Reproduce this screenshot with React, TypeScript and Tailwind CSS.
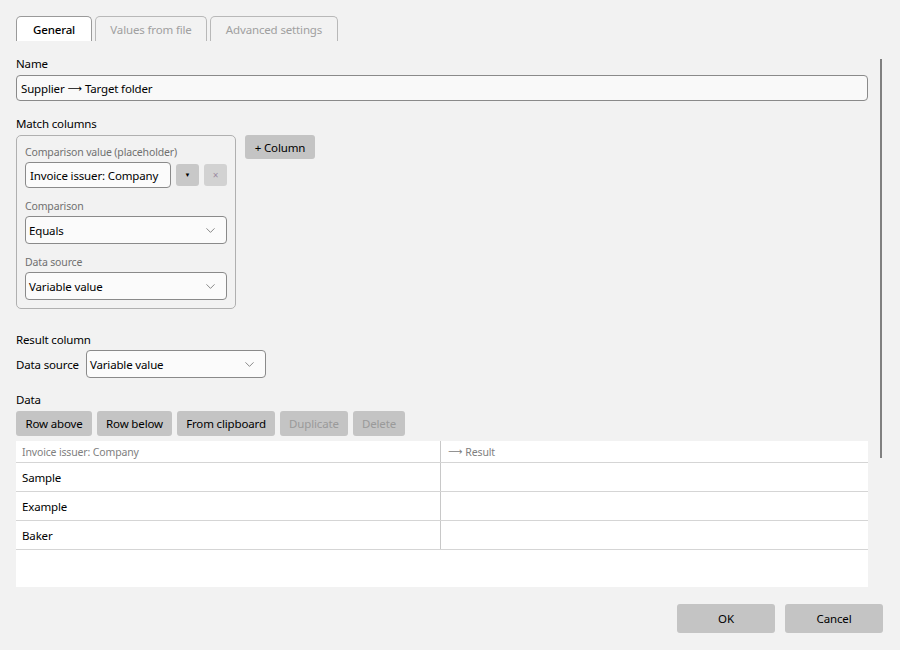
import { ChevronDown } from "lucide-react";

const font = { fontFamily: '"Noto Sans", "Segoe UI", sans-serif', letterSpacing: "-0.15px" };

function Select({ value, className = "" }: { value: string; className?: string }) {
  return (
    <div
      className={`flex h-[28px] items-center justify-between rounded-[4px] border border-[#8a8a8a] bg-[#fbfbfb] pl-[3px] pr-[8px] pt-[1px] text-[11.5px] leading-[16px] text-black ${className}`}
    >
      <span>{value}</span>
      <ChevronDown className="h-[15px] w-[15px] text-[#555]" strokeWidth={1.1} />
    </div>
  );
}

function GrayButton({ label, width, disabled = false }: { label: string; width: string; disabled?: boolean }) {
  return (
    <button
      className={`h-[25px] rounded-[3px] bg-[#c4c4c4] pt-[1px] text-[11.5px] leading-[16px] ${width} ${disabled ? "text-[#9a9a9a]" : "text-black"}`}
    >
      {label}
    </button>
  );
}

function Arrow() {
  return <span className="font-['DejaVu_Sans'] text-[10px] tracking-normal">⟶</span>;
}

export default function App() {
  const tabs = [
    { label: "General", width: "w-[76px]" },
    { label: "Values from file", width: "w-[112px]" },
    { label: "Advanced settings", width: "w-[128px]" },
  ];
  const rows = ["Sample", "Example", "Baker"];

  return (
    <div className="relative flex h-[650px] w-[900px] flex-col bg-[#f2f2f2] pl-4 pr-[17px] pt-4 text-[11.5px] leading-[16px]" style={font}>
      {/* Tabs */}
      <div className="flex gap-[3px]">
        {tabs.map((t, i) => (
          <div
            key={t.label}
            className={`flex h-[25px] items-center justify-center rounded-t-[5px] border border-b-0 pt-[2px] ${t.width} ${
              i === 0
                ? "border-[#9a9a9a] bg-white font-medium text-black"
                : "border-[#b8b8b8] bg-[#f2f2f2] text-[#a0a0a0]"
            }`}
          >
            {t.label}
          </div>
        ))}
      </div>

      {/* Name */}
      <div className="mt-[14px] pt-[1px] text-black">Name</div>
      <div className="mt-[3px] flex h-[26px] w-[852px] items-center gap-[3px] rounded-[4px] border border-[#8a8a8a] bg-[#f9f9f9] pl-[4px] pt-[1px] text-black">
        <span>Supplier</span>
        <Arrow />
        <span>Target folder</span>
      </div>

      {/* Match columns */}
      <div className="mt-[14px] pt-[1px] text-black">Match columns</div>
      <div className="mt-[3px] flex items-start gap-[9px]">
        <div className="flex w-[220px] flex-col rounded-[5px] border border-[#b0b0b0] px-[8px] pb-[8px] pt-[8px]">
          <div className="text-[10.5px] text-[#707070]">Comparison value (placeholder)</div>
          <div className="mt-[2px] flex items-center gap-[5px]">
            <div className="flex h-[26px] w-[146px] items-center rounded-[4px] border border-[#8a8a8a] bg-[#fbfbfb] pl-[4px] pt-[1px] text-black">
              Invoice issuer: Company
            </div>
            <div className="flex h-[22px] w-[23px] items-center justify-center rounded-[3px] bg-[#c8c8c8] text-[6px] text-black">
              ▼
            </div>
            <div className="flex h-[22px] w-[23px] items-center justify-center rounded-[3px] bg-[#d2d2d2] text-[10px] text-[#9a8aa0]">
              ×
            </div>
          </div>
          <div className="mt-[10px] text-[10.5px] text-[#707070]">Comparison</div>
          <Select value="Equals" className="mt-[2px]" />
          <div className="mt-[10px] text-[10.5px] text-[#707070]">Data source</div>
          <Select value="Variable value" className="mt-[2px]" />
        </div>
        <button className="h-[24px] w-[70px] rounded-[3px] bg-[#c4c4c4] pt-[1px] text-black">+ Column</button>
      </div>

      {/* Result column */}
      <div className="mt-[22px] pt-[1px] text-black">Result column</div>
      <div className="mt-[2px] flex items-center gap-[7px]">
        <span className="pt-[1px] text-black">Data source</span>
        <Select value="Variable value" className="w-[180px]" />
      </div>

      {/* Data */}
      <div className="mt-[13px] pt-[1px] text-black">Data</div>
      <div className="mt-[3px] flex gap-[5px]">
        <GrayButton label="Row above" width="w-[76px]" />
        <GrayButton label="Row below" width="w-[75px]" />
        <GrayButton label="From clipboard" width="w-[98px]" />
        <GrayButton label="Duplicate" width="w-[68px]" disabled />
        <GrayButton label="Delete" width="w-[52px]" disabled />
      </div>
      <div className="mt-[5px] flex h-[146px] w-[852px] flex-col bg-white">
        <div className="grid h-[22px] grid-cols-[425px_1fr] border-b border-[#d5d5d5] text-[10.5px] text-[#808080]">
          <div className="flex items-center border-r border-[#c8c8c8] pl-[6px] pt-[1px]">Invoice issuer: Company</div>
          <div className="flex items-center gap-[3px] pl-[7px] pt-[1px]">
            <Arrow />
            <span>Result</span>
          </div>
        </div>
        {rows.map((r) => (
          <div key={r} className="grid h-[29px] grid-cols-[425px_1fr] border-b border-[#d5d5d5] text-black">
            <div className="flex items-center border-r border-[#c8c8c8] pl-[6px] pt-[1px]">{r}</div>
            <div />
          </div>
        ))}
      </div>

      {/* Footer */}
      <div className="mt-[17px] flex justify-end gap-[10px]">
        <button className="h-[29px] w-[98px] rounded-[3px] bg-[#c4c4c4] pt-[1px] text-black">OK</button>
        <button className="h-[29px] w-[98px] rounded-[3px] bg-[#c4c4c4] pt-[1px] text-black">Cancel</button>
      </div>

      {/* Scroll indicator */}
      <div className="absolute left-[880px] top-[59px] h-[399px] w-[2px] bg-[#808080]" />
    </div>
  );
}
